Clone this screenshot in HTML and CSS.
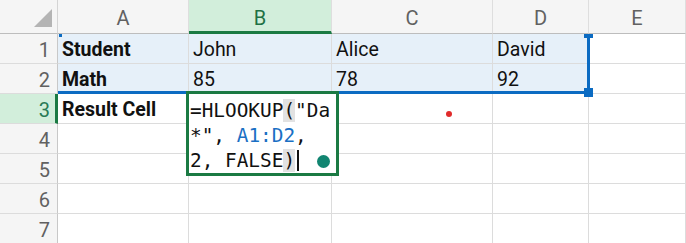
FILE: index.html
```html
<!DOCTYPE html>
<html lang="en">
<head>
    <meta charset="UTF-8">
    <meta name="viewport" content="width=device-width, initial-scale=1.0">
    <title>HLOOKUP Sheet</title>
    <link rel="stylesheet" href="styles.css">
</head>
<body>
    <div id="sheet">
        <div class="grid">
            <!-- column headers -->
            <div class="hd corner"><span class="tri"></span></div>
            <div class="hd col">A</div>
            <div class="hd col active-col">B</div>
            <div class="hd col">C</div>
            <div class="hd col">D</div>
            <div class="hd col">E</div>

            <!-- row 1 -->
            <div class="hd row">1</div>
            <div class="cell in-range bold">Student</div>
            <div class="cell in-range">John</div>
            <div class="cell in-range">Alice</div>
            <div class="cell in-range">David</div>
            <div class="cell"></div>

            <!-- row 2 -->
            <div class="hd row">2</div>
            <div class="cell in-range bold">Math</div>
            <div class="cell in-range">85</div>
            <div class="cell in-range">78</div>
            <div class="cell in-range">92</div>
            <div class="cell"></div>

            <!-- row 3 -->
            <div class="hd row active-row">3</div>
            <div class="cell bold">Result Cell</div>
            <div class="cell"></div>
            <div class="cell"></div>
            <div class="cell"></div>
            <div class="cell"></div>

            <div class="hd row">4</div>
            <div class="cell"></div><div class="cell"></div><div class="cell"></div><div class="cell"></div><div class="cell"></div>
            <div class="hd row">5</div>
            <div class="cell"></div><div class="cell"></div><div class="cell"></div><div class="cell"></div><div class="cell"></div>
            <div class="hd row">6</div>
            <div class="cell"></div><div class="cell"></div><div class="cell"></div><div class="cell"></div><div class="cell"></div>
            <div class="hd row">7</div>
            <div class="cell"></div><div class="cell"></div><div class="cell"></div><div class="cell"></div><div class="cell"></div>
        </div>

        <!-- referenced range A1:D2 -->
        <div class="range">
            <span class="handle h-tl"></span>
            <span class="handle h-tr"></span>
            <span class="handle h-br"></span>
        </div>

        <!-- in-cell editor for B3 -->
        <div class="editor">
            <div class="line">=HLOOKUP<span class="paren">(</span>"Da</div>
            <div class="line">*", <span class="ref">A1:D2</span>,</div>
            <div class="line">2, FALSE<span class="paren">)</span><span class="caret"></span></div>
            <span class="fill-dot"></span>
        </div>

        <span class="red-dot"></span>
    </div>
</body>
</html>
```

FILE: styles.css
```css
body {
    margin: 0;
    padding: 0;
    background-color: #fff;
    font-family: Roboto, 'Liberation Sans', sans-serif;
}

#sheet {
    position: relative;
    width: 686px;
    height: 243px;
    overflow: hidden;
}

.grid {
    display: grid;
    grid-template-columns: 58px 131px 143px 161px 96px 97px;
    grid-template-rows: 34px repeat(7, 30px);
}

.grid > div {
    box-sizing: border-box;
    display: flex;
    align-items: center;
}

.hd {
    background-color: #f5f5f5;
    color: #616161;
    font-size: 20px;
}

.corner {
    position: relative;
    border-right: 1px solid #d4d4d4;
    border-bottom: 1px solid #bdbdbd;
}

.tri {
    position: absolute;
    right: 5px;
    bottom: 6px;
    width: 0;
    height: 0;
    border-left: 18px solid transparent;
    border-bottom: 18px solid #b4b4b4;
}

.col {
    justify-content: center;
    border-right: 1px solid #dedede;
    border-bottom: 1px solid #bdbdbd;
    padding-top: 2px;
}

.active-col {
    background-color: #d2eedb;
    color: #1e7145;
    border-bottom: 3px solid #1b7a43;
    padding-top: 4px;
}

.row {
    justify-content: flex-end;
    padding-right: 7px;
    padding-top: 2px;
    border-right: 1px solid #c8c8c8;
    border-bottom: 1px solid #dcdcdc;
}

.active-row {
    background-color: #d2eedb;
    color: #2a7a55;
    border-right: 3px solid #1b7a43;
    padding-right: 5px;
}

.cell {
    padding-left: 4px;
    padding-top: 2px;
    font-size: 19.5px;
    color: #111;
    border-right: 1px solid #dcdcdc;
    border-bottom: 1px solid #dcdcdc;
    white-space: nowrap;
}

.in-range {
    background-color: #e6f0f9;
}

.bold {
    font-weight: bold;
}

/* range outline for A1:D2 */
.range {
    position: absolute;
    left: 58px;
    top: 34px;
    width: 532px;
    height: 60px;
    box-sizing: border-box;
    border-right: 3px solid #0b6bc2;
    border-bottom: 3px solid #0b6bc2;
}

.handle {
    position: absolute;
    background-color: #0b6bc2;
}

.h-tl {
    left: 1px;
    top: 0;
    width: 3px;
    height: 3px;
}

.h-tr {
    right: -6px;
    top: 0;
    width: 9px;
    height: 4px;
}

.h-br {
    right: -6px;
    bottom: -6px;
    width: 9px;
    height: 9px;
}

/* editor box */
.editor {
    position: absolute;
    left: 186px;
    top: 91px;
    width: 153px;
    height: 85px;
    box-sizing: border-box;
    border: 3px solid #1b7a43;
    background-color: #fff;
    padding: 4px 0 0 1px;
    font-family: 'DejaVu Sans Mono', 'Liberation Mono', monospace;
    font-size: 19.4px;
    line-height: 25px;
    color: #111;
}

.line {
    height: 25px;
    white-space: pre;
}

.ref {
    color: #1a70c4;
}

.paren {
    background-color: #e2e2e2;
}

.caret {
    display: inline-block;
    width: 2px;
    height: 21px;
    margin-left: 2px;
    background-color: #111;
    vertical-align: -4px;
}

.fill-dot {
    position: absolute;
    left: 128px;
    top: 61px;
    width: 13px;
    height: 13px;
    border-radius: 50%;
    background-color: #118571;
}

.red-dot {
    position: absolute;
    left: 446px;
    top: 111px;
    width: 6px;
    height: 6px;
    border-radius: 50%;
    background-color: #e12b2b;
}
```
